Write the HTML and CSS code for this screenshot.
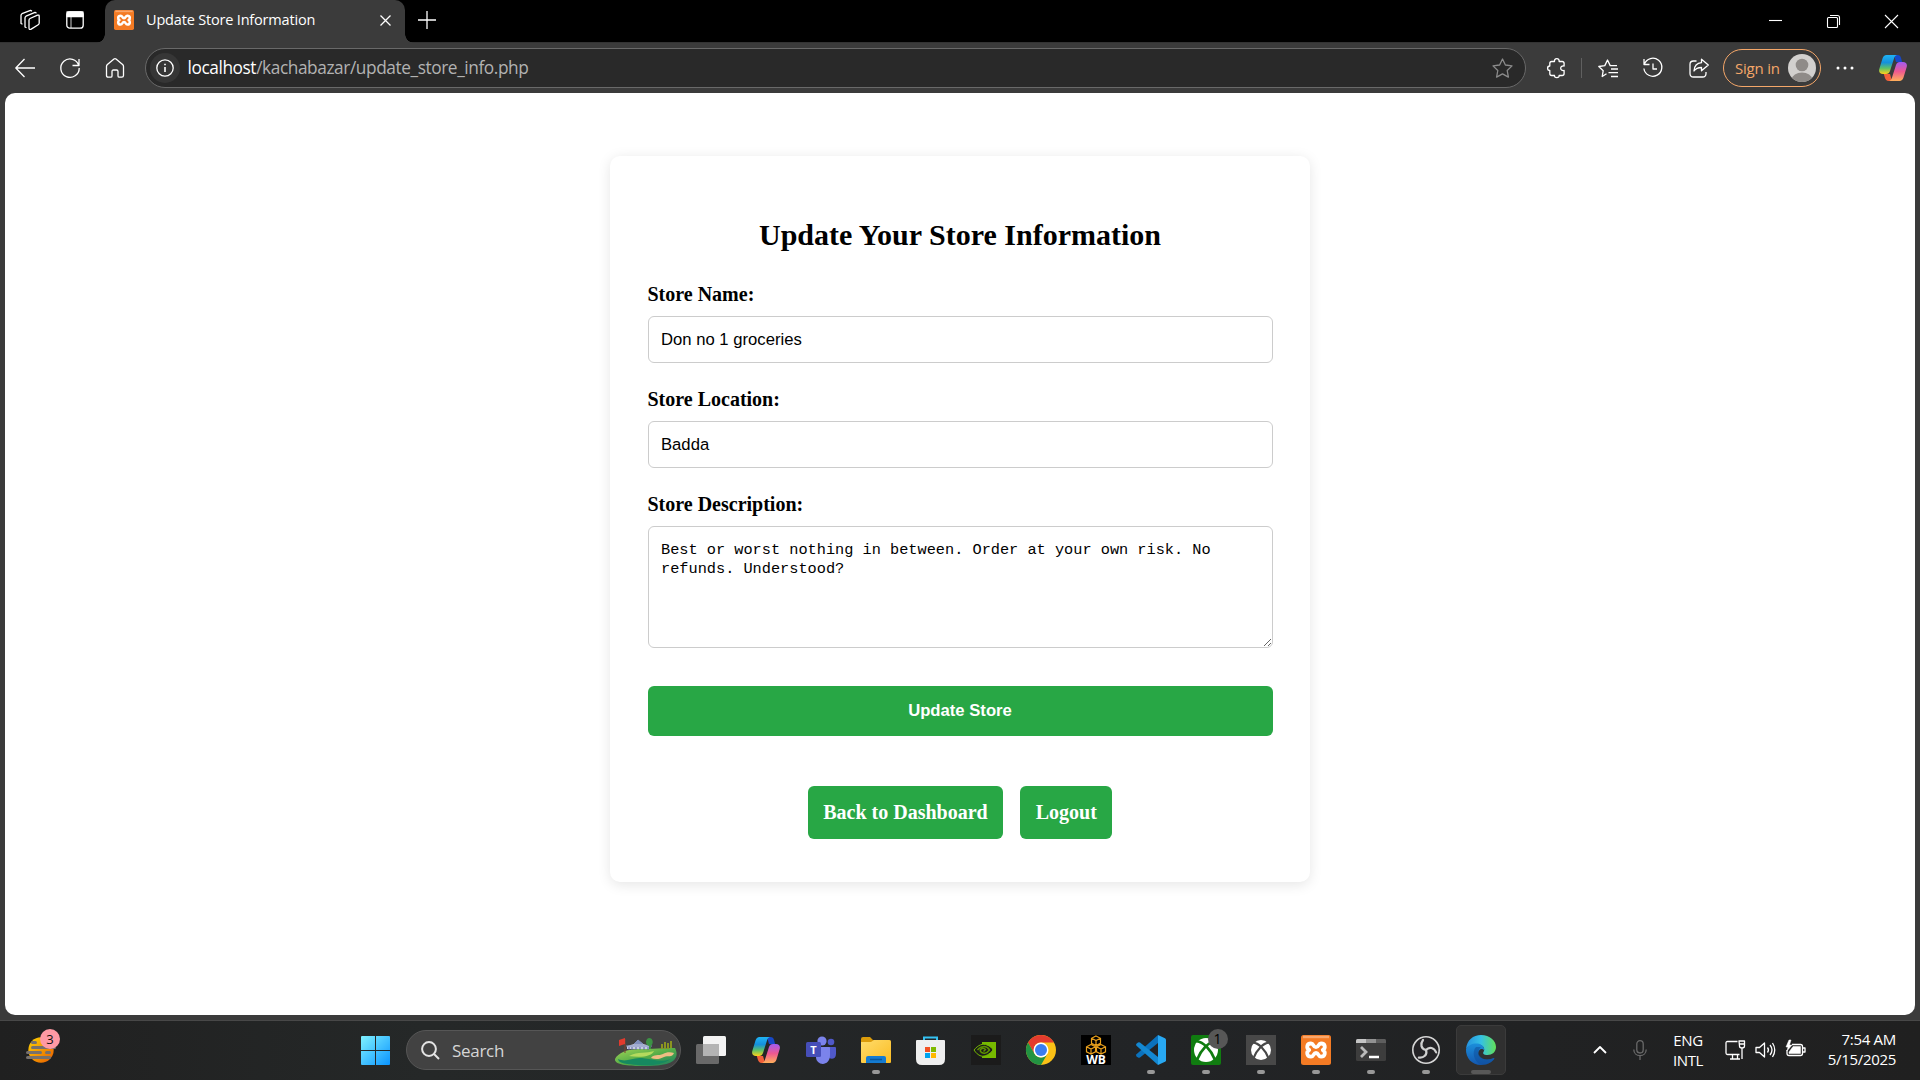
FILE: index.html
```html
<!DOCTYPE html>
<html lang="en">
<head>
<meta charset="utf-8">
<title>Update Store Information</title>
<link rel="stylesheet" href="styles.css">
</head>
<body>
<svg class="defs" width="0" height="0" aria-hidden="true">
  <defs>
    <linearGradient id="cpA" x1="0" y1="0" x2="0" y2="1"><stop offset="0" stop-color="#1fb4f5"/><stop offset=".4" stop-color="#1590dc"/><stop offset=".7" stop-color="#5fc266"/><stop offset="1" stop-color="#ffd21a"/></linearGradient>
    <linearGradient id="cpB" x1="0" y1="0" x2="0" y2="1"><stop offset="0" stop-color="#a25bf0"/><stop offset=".5" stop-color="#ef5890"/><stop offset="1" stop-color="#ffb05a"/></linearGradient>
    <linearGradient id="win" x1="0" y1="0" x2="1" y2="1"><stop offset="0" stop-color="#80f2ff"/><stop offset="1" stop-color="#0a94ff"/></linearGradient>
    <linearGradient id="sun" x1="0" y1="0" x2="1" y2="1"><stop offset="0" stop-color="#ffd500"/><stop offset="1" stop-color="#e85a00"/></linearGradient>
    <linearGradient id="hill" x1="0" y1="0" x2="1" y2="1"><stop offset="0" stop-color="#a5d657"/><stop offset=".5" stop-color="#57ad47"/><stop offset="1" stop-color="#167d63"/></linearGradient>
    <linearGradient id="fold" x1="0" y1="0" x2="1" y2="1"><stop offset="0" stop-color="#ffdc6b"/><stop offset="1" stop-color="#fbbc22"/></linearGradient>
    <linearGradient id="edgeTop" x1="0" y1="0" x2="1" y2="0"><stop offset="0" stop-color="#2490df"/><stop offset=".5" stop-color="#35c1e4"/><stop offset="1" stop-color="#62e058"/></linearGradient>
    <linearGradient id="edgeLow" x1="0" y1="0" x2="0" y2="1"><stop offset="0" stop-color="#1b8edb"/><stop offset="1" stop-color="#1457ae"/></linearGradient>
    <symbol id="copilot" viewBox="0 0 28 26">
      <path d="M15 0h3.500c2 0 3 1.200 3.600 3.200l1 3.800H17z" fill="#1748c7"/>
      <path d="M7.500 0H18c-1.700.4-2.500 1.800-3 3.500L11 16c-.7 2-1.800 3-4 3H4c-3 0-4.500-2-3.700-5L3.500 3.500C4.200 1.200 5.500 0 7.500 0z" fill="url(#cpA)"/>
      <path d="M13 26H9.500c-2 0-3-1.200-3.600-3.200L4.800 19H11z" fill="#f2603a"/>
      <path d="M20.500 26H10c1.700-.4 2.500-1.800 3-3.500L17 10c.7-2 1.800-3 4-3h3c3 0 4.500 2 3.700 5l-3.200 10.500c-.7 2.300-2 3.500-4 3.500z" fill="url(#cpB)"/>
    </symbol>
    <symbol id="xampp" viewBox="0 0 30 30">
      <rect width="30" height="30" rx="2.500" fill="#f47b24"/><path d="M2 .8h26v2.400H2z" fill="#f9a76c"/>
      <path d="M10 8.500c3 0 2 3.700 5 3.700s2-3.700 5-3.700c4.500 0 4.800 4.800 1.800 6.500 3 1.700 2.700 6.700-1.800 6.700-3 0-2-3.700-5-3.700s-2 3.700-5 3.700c-4.500 0-4.800-5-1.800-6.700-3-1.700-2.700-6.500 1.800-6.500z" fill="none" stroke="#fff" stroke-width="3.800" stroke-linejoin="round"/>
    </symbol>
    <symbol id="xball" viewBox="0 0 24 24">
      <circle cx="12" cy="12" r="12" fill="#fff"/>
      <path d="M2.500 3.200C9 3.500 17 11.500 20.800 21.500M21.500 3.200C15 3.500 7 11.500 3.200 21.500" fill="none" stroke="var(--xbg)" stroke-width="2.600"/>
    </symbol>
  </defs>
</svg>
<div class="window">
  <header class="tabstrip">
    <svg class="ic workspaces" width="20" height="20" viewBox="0 0 20 20"><path d="M9 10.200q0-1.200 1-1.700l7.500-3.300q1.700-.6 1.700 1V13q0 1.200-1 1.800l-7 4.300q-2.200 1-2.200-1zM6.500 17.800L5 17V8q0-1.200 1-1.800l9-3.900 1.500.8M2.500 14.300L1 13.500v-8q0-1.200 1-1.800L10.500.3l1.500.8"/></svg>
    <svg class="ic tabmenu" width="18" height="18" viewBox="0 0 18 18"><rect x=".8" y=".8" width="16.400" height="16.400" rx="3"/><path d="M1 1h16v4.500H1z" fill="#fff"/><path d="M5 5v12" stroke-width=".8"/></svg>
    <div class="tab">
      <svg width="20" height="20"><use href="#xampp"/></svg>
      <span class="tab-title">Update Store Information</span>
      <svg class="ic" width="11" height="11" viewBox="0 0 11 11"><path d="M.5.5l10 10M10.500.5l-10 10"/></svg>
    </div>
    <svg class="ic newtab" width="18" height="18" viewBox="0 0 18 18"><path d="M9 0v18M0 9h18"/></svg>
    <div class="controls">
      <svg class="ic" width="13" height="13" viewBox="0 0 13 13"><path d="M0 5.500h13"/></svg>
      <svg class="ic" width="13" height="13" viewBox="0 0 13 13"><rect x=".5" y="2.500" width="10" height="10" rx="1"/><path d="M3 .5h7.500a2 2 0 0 1 2 2V10"/></svg>
      <svg class="ic" width="13" height="13" viewBox="0 0 13 13"><path d="M0 0l13 13M13 0L0 13"/></svg>
    </div>
  </header>
  <nav class="toolbar">
    <div class="nav-icons">
      <svg class="ic" width="20" height="20" viewBox="0 0 20 20"><path d="M20 10H1M9.500 1L.8 10l8.700 9"/></svg>
      <svg class="ic" width="20" height="20" viewBox="0 0 20 20"><path d="M18.800 7.500A9.200 9.200 0 1 0 19.200 10M19 1v6.500h-6.500"/></svg>
      <svg class="ic" width="20" height="20" viewBox="0 0 20 20"><path d="M1.500 8.500c0-.8.300-1.400.9-1.900L9 1c.6-.5 1.400-.5 2 0l6.600 5.600c.6.5.9 1.100.9 1.900v9c0 1-.6 1.700-1.700 1.700h-2.500c-.8 0-1.300-.5-1.300-1.300V13.500c0-.9-.5-1.500-1.400-1.500H8.400c-.9 0-1.400.6-1.400 1.500v4.400c0 .8-.5 1.300-1.300 1.300H3.200c-1.100 0-1.700-.7-1.700-1.700z"/></svg>
    </div>
    <div class="address">
      <span class="info"><svg class="ic" width="18" height="18" viewBox="0 0 18 18"><circle cx="9" cy="9" r="8.200"/><path d="M9 8v5M9 4.800v1.500" stroke-width="1.600"/></svg></span>
      <span class="url"><b>localhost</b>/kachabazar/update_store_info.php</span>
      <svg class="ic star" width="21" height="20" viewBox="0 0 21 20"><path d="M10.500 1l2.900 6 6.600.9-4.800 4.600 1.200 6.600-5.900-3.200-5.900 3.200 1.200-6.600L1 7.900 7.600 7z"/></svg>
    </div>
    <svg class="ic ext" width="20" height="20" viewBox="0 0 20 20"><path d="M2.800 5.500c0-1.200.7-2 1.900-2h2.800c-.3-1.500.6-2.900 2.300-2.900s2.600 1.400 2.300 2.900h3c1.200 0 2 .8 2 2V8c-2.500-.3-3.400 1-3.400 2.300s1 2.500 3.400 2.200v3c0 1.200-.8 2-2 2h-3c.3 1.200-.7 2.200-2.300 2.200s-2.600-1-2.300-2.200H4.700c-1.200 0-1.900-.8-1.900-2v-3C1.500 12.500.6 11.500.6 10.200S1.500 8 2.800 8z"/></svg>
    <i class="sep"></i>
    <svg class="ic fav" width="20" height="20" viewBox="0 0 20 20"><path d="M8.500 15.800L4.200 18.500l1-5.800L.8 8.500l6-.9L9.500 2l2.700 5.600H19M13 11h7M10.500 14.700H20M13 18.500h7"/></svg>
    <svg class="ic hist" width="20" height="20" viewBox="0 0 20 20"><path d="M1 1v5.500h5.500M1.300 6.300A9 9 0 1 1 .9 10.500M10 5.500V11h4"/></svg>
    <svg class="ic share" width="20" height="20" viewBox="0 0 20 20"><path d="M7.500 3H4.500C2.300 3 1 4.300 1 6.500v9C1 17.700 2.300 19 4.500 19h9c2.200 0 3.500-1.300 3.500-3.500V14M12.500 1.200l6.800 5.800-6.800 5.800V9.500c-3.300 0-5.700.8-7.500 3.500.3-4.500 2.800-8 7.500-8.300z"/></svg>
    <div class="signin"><span>Sign in</span>
      <svg width="28" height="28" viewBox="0 0 28 28"><clipPath id="av"><circle cx="14" cy="14" r="14"/></clipPath><g clip-path="url(#av)"><path d="M0 0h28v28H0z" fill="#d2d0ce"/><circle cx="14" cy="11" r="6.300" fill="#8f8b88"/><ellipse cx="14" cy="25" rx="10" ry="6.500" fill="#8f8b88"/></g></svg>
    </div>
    <svg class="dots" width="18" height="4" viewBox="0 0 18 4" fill="#fff"><circle cx="2" cy="2" r="1.500"/><circle cx="9" cy="2" r="1.500"/><circle cx="16" cy="2" r="1.500"/></svg>
    <svg class="cop" width="28" height="26"><use href="#copilot"/></svg>
  </nav>
  <main class="page">
    <form class="card">
      <h2>Update Your Store Information</h2>
      <label>Store Name:</label>
      <input type="text" value="Don no 1 groceries">
      <label>Store Location:</label>
      <input type="text" value="Badda">
      <label>Store Description:</label>
      <textarea spellcheck="false">Best or worst nothing in between. Order at your own risk. No refunds. Understood?</textarea>
      <button type="button">Update Store</button>
      <div class="links"><a>Back to Dashboard</a><a>Logout</a></div>
    </form>
  </main>
</div>
<footer class="taskbar">
  <div class="widget">
    <svg width="30" height="26" viewBox="0 0 30 26"><circle cx="15" cy="13" r="12.700" fill="url(#sun)"/><path d="M6.500 5.500h3M6.500 10.500h22M1.500 15.500h13M20.500 15.500h3M1.500 20.500h22" stroke="#77716d" stroke-width="3" stroke-linecap="round"/></svg>
    <span class="badge">3</span>
  </div>
  <svg class="start" width="29" height="29" viewBox="0 0 29 29"><path d="M0 1Q0 0 1 0H14V14H0zM15 0h13q1 0 1 1v13H15zM0 15h14v14H1q-1 0-1-1zM15 15h14v13q0 1-1 1H15z" fill="url(#win)"/></svg>
  <div class="search">
    <svg width="19" height="19" viewBox="0 0 19 19" fill="none" stroke="#e4e4e4" stroke-width="2"><circle cx="8" cy="8" r="6.900"/><path d="M13 13l5 5"/></svg>
    <span>Search</span>
    <svg class="golf" width="62" height="29" viewBox="0 0 62 29"><path d="M0 21C3 15 12 11 24 11s26-1 36-1c2 4 3 9-2 13-7 5-22 5-33 5S-1 27 0 21z" fill="url(#hill)"/><path d="M3 21c9 4 14-2 24-1s20 5 29 1c-8 6-22 7-33 6S4 26 3 21z" fill="#168960"/><path d="M14 18c9-5 17-2 25-5-2 5-12 7-25 5z" fill="#b5da5d"/><path d="M36 20c2-4 8-2 12-4 3-2 8-2 11-1-2 5-6 2-10 4s-8 3-13 1z" fill="#f0bd83"/><path d="M12 11V8l7-2 4-3 5 3 8 2v3z" fill="#c6cbe5"/><path d="M19 6l4-4 5 4zM11 8h26" fill="#8190bd" stroke="#8190bd"/><path d="M14 9v3M17 9v3M21 9v3M25 9v3M29 9v3M33 9v3" stroke="#5e6a9f"/><path d="M34 0c4 0 5 5 2 8v3h-2V8c-4-1-4-7 0-8z" fill="#3c9345"/><path d="M47 11V6M50 11V4M53 11V5M56 10V3" stroke="#8c9420" stroke-width="2"/><path d="M10 1v14" stroke="#7f4230"/><path d="M10 0L4 2v6l6-2z" fill="#e23a2e"/></svg>
  </div>
  <div class="apps">
    <span class="app"><svg width="30" height="28" viewBox="0 0 30 28"><rect y="8" width="23" height="20" rx="1.500" fill="#696969"/><rect x="7" width="23" height="20" rx="1.500" fill="#f3f3f3"/><path d="M7 8h16v12H7z" fill="#b4b4b4"/></svg></span>
    <span class="app"><svg width="28" height="26"><use href="#copilot"/></svg></span>
    <span class="app"><svg width="30" height="28" viewBox="0 0 30 28"><circle cx="25" cy="6" r="3.300" fill="#5059c9"/><path d="M20 11h9q1 0 1 1v6c0 6-7 6-8 2z" fill="#5059c9"/><circle cx="16" cy="5" r="4.600" fill="#7b83eb"/><path d="M10 11h13q1 0 1 1v7c0 12-14 11-14 2z" fill="#7b83eb"/><rect y="6" width="15" height="15" rx="1.500" fill="#464eb8"/><text x="7.500" y="17.500" text-anchor="middle" class="t-letter">T</text></svg></span>
    <span class="app run"><svg width="30" height="28" viewBox="0 0 30 28"><path d="M0 3q0-2 2-2h7l3 3h16q2 0 2 2v6H0z" fill="#dc9c0b"/><path d="M0 6h10l3-2h15q2 0 2 2v20q0 1-1 1H1q-1 0-1-1z" fill="url(#fold)"/><path d="M5 27v-5q0-2 2-2h16q2 0 2 2v5z" fill="#147bd1"/><path d="M9 23.500h12" stroke="#07579d" stroke-width="1.500"/></svg></span>
    <span class="app"><svg width="29" height="29" viewBox="0 0 29 29"><path d="M8 6V1.500h13V6" fill="none" stroke="#35c2f2" stroke-width="2"/><path d="M1 4h27q1 0 1 1v18q0 6-6 6H6q-6 0-6-6V5q0-1 1-1z" fill="#efefef"/><path d="M9 11h5v5H9z" fill="#f25022"/><path d="M15 11h5v5h-5z" fill="#7fba00"/><path d="M9 17h5v5H9z" fill="#00a4ef"/><path d="M15 17h5v5h-5z" fill="#ffb900"/></svg></span>
    <span class="app"><svg width="30" height="30" viewBox="0 0 30 30"><path d="M0 0h30v30H0z" fill="#1b1b1b"/><path d="M11 7h14v16H11z" fill="#76b900"/><path d="M3 15c4-5 9-7 13-5 3 1 5 3 6 5-3 4-8 7-12 6-3-1-5-3-7-6z" fill="#1b1b1b" stroke="#76b900"/><path d="M6.500 15c3-4 9-5 12 0-3 4-7 4-9 1.500-1-3 3-4.500 5-2l-2 2" fill="none" stroke="#5d9100" stroke-width="1.500"/></svg></span>
    <span class="app"><svg width="30" height="30" viewBox="0 0 30 30"><circle cx="15" cy="15" r="15" fill="#fbc116"/><path d="M2 7.500A15 15 0 0 1 28 7.500H15A7.500 7.500 0 0 0 8.300 11.700L8.500 18.700z" fill="#e33b2e"/><path d="M2 7.500A15 15 0 0 0 15 30l6.500-11.300A7.500 7.500 0 0 1 8.500 18.700z" fill="#229342"/><circle cx="15" cy="15" r="7.500" fill="#fff"/><circle cx="15" cy="15" r="6" fill="#3a7df0"/></svg></span>
    <span class="app"><svg width="30" height="30" viewBox="0 0 30 30"><path d="M0 0h30v30H0z" fill="#000"/><path d="M15 1l4.500 2.300v5L15 10.500l-4.500-2.200v-5zM10 9.500l4.500 2.300v5L10 19l-4.500-2.200v-5zM20 9.500l4.500 2.300v5L20 19l-4.500-2.200v-5zM10.500 3.300L15 5.500l4.500-2.200M15 5.500v5M5.500 11.800L10 14l4.500-2.200M10 14v5M15.500 11.800L20 14l4.500-2.200M20 14v5" fill="none" stroke="#e9a01c" stroke-width="1.200"/><text x="15" y="29.300" text-anchor="middle" class="wb">WB</text></svg></span>
    <span class="app run"><svg width="30" height="30" viewBox="0 0 30 30"><path d="M22 0l7 3.200q1 .5 1 1.500v20.600q0 1-1 1.500L22 30z" fill="#28a8f2"/><path d="M22 0v8L4 22.500q-1 .7-2 0l-1.500-1.300q-1-1 0-2z" fill="#0b72bd"/><path d="M22 30v-8L4 7.500q-1-.7-2 0L.5 8.800q-1 1 0 2z" fill="#1488d2"/></svg></span>
    <span class="app run green"><svg width="30" height="30" viewBox="0 0 30 30"><rect width="30" height="30" rx="2" fill="#107c10"/><use href="#xball" x="3" y="3" width="24" height="24"/></svg><span class="count">1</span></span>
    <span class="app run gray"><svg width="30" height="30" viewBox="0 0 30 30"><path d="M0 0h30v30H0z" fill="#484848"/><use href="#xball" x="5" y="5" width="20" height="20"/></svg></span>
    <span class="app run"><svg width="30" height="30"><use href="#xampp"/></svg></span>
    <span class="app run"><svg width="30" height="22" viewBox="0 0 30 22"><rect width="30" height="22" rx="1.500" fill="#3d3d3d"/><path d="M0 4V1.500Q0 0 1.500 0H10v4z" fill="#c5c5c5"/><path d="M10 0h10v4H10z" fill="#929292"/><path d="M20 0h8.500Q30 0 30 1.500V4H20z" fill="#5e5e5e"/><path d="M5 8l5 5-5 5" fill="none" stroke="#bbb" stroke-width="2.800"/><path d="M13 18h10" stroke="#fff" stroke-width="2.500"/></svg></span>
    <span class="app run"><svg width="28" height="28" viewBox="0 0 28 28"><circle cx="14" cy="14" r="13.200" fill="#242326" stroke="#d6d6d6" stroke-width="1.600"/><path id="blade" d="M14 14c-5-1-6-6-3-10" fill="none" stroke="#d0d0d0" stroke-width="2.200" stroke-linecap="round"/><use href="#blade" transform="rotate(120 14 14)"/><use href="#blade" transform="rotate(240 14 14)"/></svg></span>
    <span class="app run active"><svg width="30" height="30" viewBox="0 0 30 30"><path d="M0 14C1 5 7 0 15 0c9 0 15 6 15 12 0 5-4 8-8.500 8-4 0-5-1.500-4-3 2-3 0-7-5-7.500C7 9 2 11 0 14z" fill="url(#edgeTop)"/><path d="M0 14c2-4 7-6 11.500-5.500 4.500.5 7.500 4 6.500 7-.7-1.500-3-2-4.500-.5-4 5 2 10 8 9.500 3 0 4.500-1 6-1.500 1 0 1 .7.500 1.300C25 28 20 30 15 30 6 30-.5 23 0 14z" fill="url(#edgeLow)"/><path d="M10 12c-4 4-3 14 5 18 5 0 10-2 13-5.500.5-.8.500-1.500-.5-1.500-4 2-9 2-12-.5-4-3-3.500-8-.5-10.500z" fill="#0e4b98" opacity=".5"/></svg></span>
  </div>
  <div class="tray">
    <svg class="ic chev" width="14" height="8" viewBox="0 0 14 8"><path d="M1 7l6-6 6 6"/></svg>
    <svg class="ic mic" width="14" height="20" viewBox="0 0 14 20"><rect x="3.800" y=".7" width="6.400" height="12.300" rx="3.200"/><path d="M.8 9.500c0 8.200 12.400 8.200 12.400 0M7 15.800V20"/></svg>
    <div class="lang">ENG<br>INTL</div>
    <svg class="ic net" width="20" height="20" viewBox="0 0 20 20"><path d="M12.500 1.500H2.500Q1 1.500 1 3v10q0 1.500 1.500 1.500h12M5 19h10M7.500 15v4M12.500 15v4M14 1h5.500v5Q19.500 8 17 8t-2.500-2zM17 8v11M14.500 4h5"/></svg>
    <svg class="ic vol" width="20" height="20" viewBox="0 0 20 20"><path d="M1 7.500h3.500L9.500 3v14l-5-4.500H1zM12.500 7.500q2 2.500 0 5M15 5q4 5 0 10M17.500 3q4.500 7 0 14"/></svg>
    <svg class="ic bat" width="20" height="20" viewBox="0 0 20 20"><path d="M7 4.500h8.500q2 0 2 2v7q0 2-2 2H4q-2 0-2-2V10M17.500 8H20v4h-2.500"/><path d="M4 12l4-5.500h7.500v7H4zM4 0L1 7h2l-1 4 5-6H4.500L6 0z" fill="#fff" stroke-width=".5"/></svg>
    <div class="clock">7:54 AM<br>5/15/2025</div>
  </div>
</footer>
</body>
</html>
```
FILE: styles.css
```css
* { box-sizing: border-box; }
body { margin: 0; width: 1920px; height: 1080px; overflow: hidden; display: flex; flex-direction: column; background: #212121; font-family: "Open Sans", "Noto Sans", sans-serif; color: #fff; }
svg { display: block; flex: none; overflow: visible; }
.defs { position: absolute; }
.ic { fill: none; stroke: #fff; stroke-width: 1.3; stroke-linejoin: round; }
.window { height: 1020px; background: #3b3b3b; flex: none; }

.tabstrip { height: 43px; display: flex; background: #000; border-bottom: 1px solid #333; }
.workspaces { margin: 10px 0 0 20px; }
.tabmenu { margin: 11px 21px 0 26px; }
.tab { position: relative; width: 300px; height: 43px; flex: none; display: flex; align-items: center; padding: 0 14px 3px 9px; background: #3b3b3b; border-radius: 10px 10px 0 0; }
.tab::before, .tab::after { content: ""; position: absolute; bottom: 0; width: 9px; height: 9px; }
.tab::before { left: -9px; background: radial-gradient(circle at 0 0, transparent 8.5px, #3b3b3b 9px); }
.tab::after { right: -9px; background: radial-gradient(circle at 100% 0, transparent 8.5px, #3b3b3b 9px); }
.tab-title { flex: 1; margin-left: 12px; font-size: 14.5px; line-height: 20px; letter-spacing: -.18px; white-space: nowrap; }
.newtab { margin: 11px 0 0 13px; }
.controls { margin: 15px 22px 0 auto; display: flex; gap: 45px; }
.controls .ic { stroke-width: 1.1; }

.toolbar { height: 50px; display: flex; align-items: center; }
.nav-icons { display: flex; gap: 25px; margin-left: 15px; }
.address { width: 1381px; height: 40px; margin-left: 20px; padding: 0 12px 0 4px; display: flex; align-items: center; border: 1px solid #696969; border-radius: 20px; background: #292929; flex: none; }
.info { width: 30px; height: 30px; border-radius: 50%; background: #363636; display: grid; place-items: center; }
.url { flex: 1; margin-left: 7.5px; font-size: 17.3px; line-height: 26px; color: #b2b2b2; letter-spacing: -.42px; white-space: nowrap; }
.url b { color: #fff; font-weight: 400; }
.star { stroke: #8b8b8b; }
.ext { margin-left: 21px; }
.sep { width: 1px; height: 20px; margin: 0 16px 0 14px; background: #606060; }
.hist { margin-left: 25px; }
.share { margin-left: 26px; }
.signin { width: 98px; height: 38px; margin: -1px 0 0 14px; padding: 0 4px 0 11px; display: flex; align-items: center; justify-content: space-between; border: 1.5px solid #f5a769; border-radius: 19px; color: #f5a769; font-size: 15px; line-height: 20px; letter-spacing: -.2px; white-space: nowrap; flex: none; }
.dots { margin-left: 15px; }
.cop { margin-left: 25px; }

.page { height: 922px; margin: 0 5px; padding-top: 63px; border-radius: 10px; background: #fff; color: #000; }
.card { width: 700px; height: 726px; margin: 0 auto; padding: 62px 37.5px 0; border-radius: 10px; background: #fff; box-shadow: 0 2.5px 12.5px rgba(0, 0, 0, .1); font-family: "Liberation Serif", serif; display: flex; flex-direction: column; }
.card h2 { margin: 0 0 31px; text-align: center; font-size: 30px; line-height: 34px; }
.card label { margin-bottom: 10px; font-size: 20px; line-height: 23px; font-weight: 700; }
.card input { height: 47px; margin: 0 0 25px; padding: 0 12.5px; border: 1px solid #ccc; border-radius: 6px; background: #fff; color: #000; font: 16.67px "Liberation Sans", sans-serif; }
.card textarea { height: 122px; margin: 0 0 38px; padding: 14px 12.5px; border: 1px solid #ccc; border-radius: 6px; background: #fff; color: #000; font: 15.27px/19px "Liberation Mono", monospace; resize: vertical; overflow: hidden; }
.card button { height: 50px; border: 0; border-radius: 6px; background: #28a745; color: #fff; font: 700 16.67px "Liberation Sans", sans-serif; }
.links { display: flex; justify-content: center; gap: 17px; margin-top: 50px; }
.links a { height: 53px; padding: 0 15.5px; border-radius: 6px; background: #28a745; color: #fff; font-size: 20px; line-height: 53px; font-weight: 700; }

.taskbar { height: 60px; display: flex; align-items: center; padding-bottom: 1px; border-top: 1px solid #484848; background: linear-gradient(90deg, #202020, #252828 22%, #222426 60%, #202020); }
.widget { position: relative; margin-left: 26px; }
.badge { position: absolute; left: 14px; top: -8px; width: 20px; height: 20px; border-radius: 50%; background: #ff99a4; color: #111; font-size: 13px; line-height: 20px; text-align: center; }
.start { margin-left: 305px; }
.search { width: 275px; height: 40px; margin-left: 16px; padding: 0 3px 0 14px; display: flex; align-items: center; border: 1px solid #565656; border-radius: 20px; background: #424242; flex: none; }
.search span { flex: 1; margin-left: 12px; font-size: 17px; letter-spacing: -.3px; color: #d6d6d6; }
.golf { margin-top: 5px; }
.apps { width: 826px; margin-left: 2px; display: flex; flex: none; }
.app { position: relative; flex: 1; height: 50px; display: grid; place-items: center; }
.run::after { content: ""; position: absolute; left: calc(50% - 4px); bottom: 1px; width: 8px; height: 4px; border-radius: 2px; background: #989898; }
.active::before { content: ""; position: absolute; inset: 0 2.500px; border: 1px solid #3b3b3b; border-radius: 5px; background: #303030; }
.active svg { position: relative; }
.active::after { left: calc(50% - 10px); width: 20px; background: #585858; }
.green { --xbg: #107c10; }
.gray { --xbg: #484848; }
.count { position: absolute; left: 29px; top: 4px; width: 20px; height: 20px; border-radius: 50%; background: #575757; color: #000; font-size: 14px; line-height: 20px; text-align: center; }
.t-letter { font: 700 11px "Open Sans", sans-serif; fill: #fff; }
.wb { font: 700 12px "Open Sans", sans-serif; fill: #fff; }
.tray { flex: 1; display: flex; align-items: center; padding-right: 24px; font-size: 15px; line-height: 20px; letter-spacing: -.4px; white-space: nowrap; }
.chev { margin-left: 84px; stroke-width: 1.8; }
.mic { margin-left: 26px; stroke: #696969; }
.lang { width: 30px; margin-left: 26px; text-align: center; }
.net { margin-left: 22px; }
.vol { margin-left: 10px; }
.bat { margin-left: 10px; }
.clock { margin: 0 0 2px auto; text-align: right; letter-spacing: -.3px; }
```
